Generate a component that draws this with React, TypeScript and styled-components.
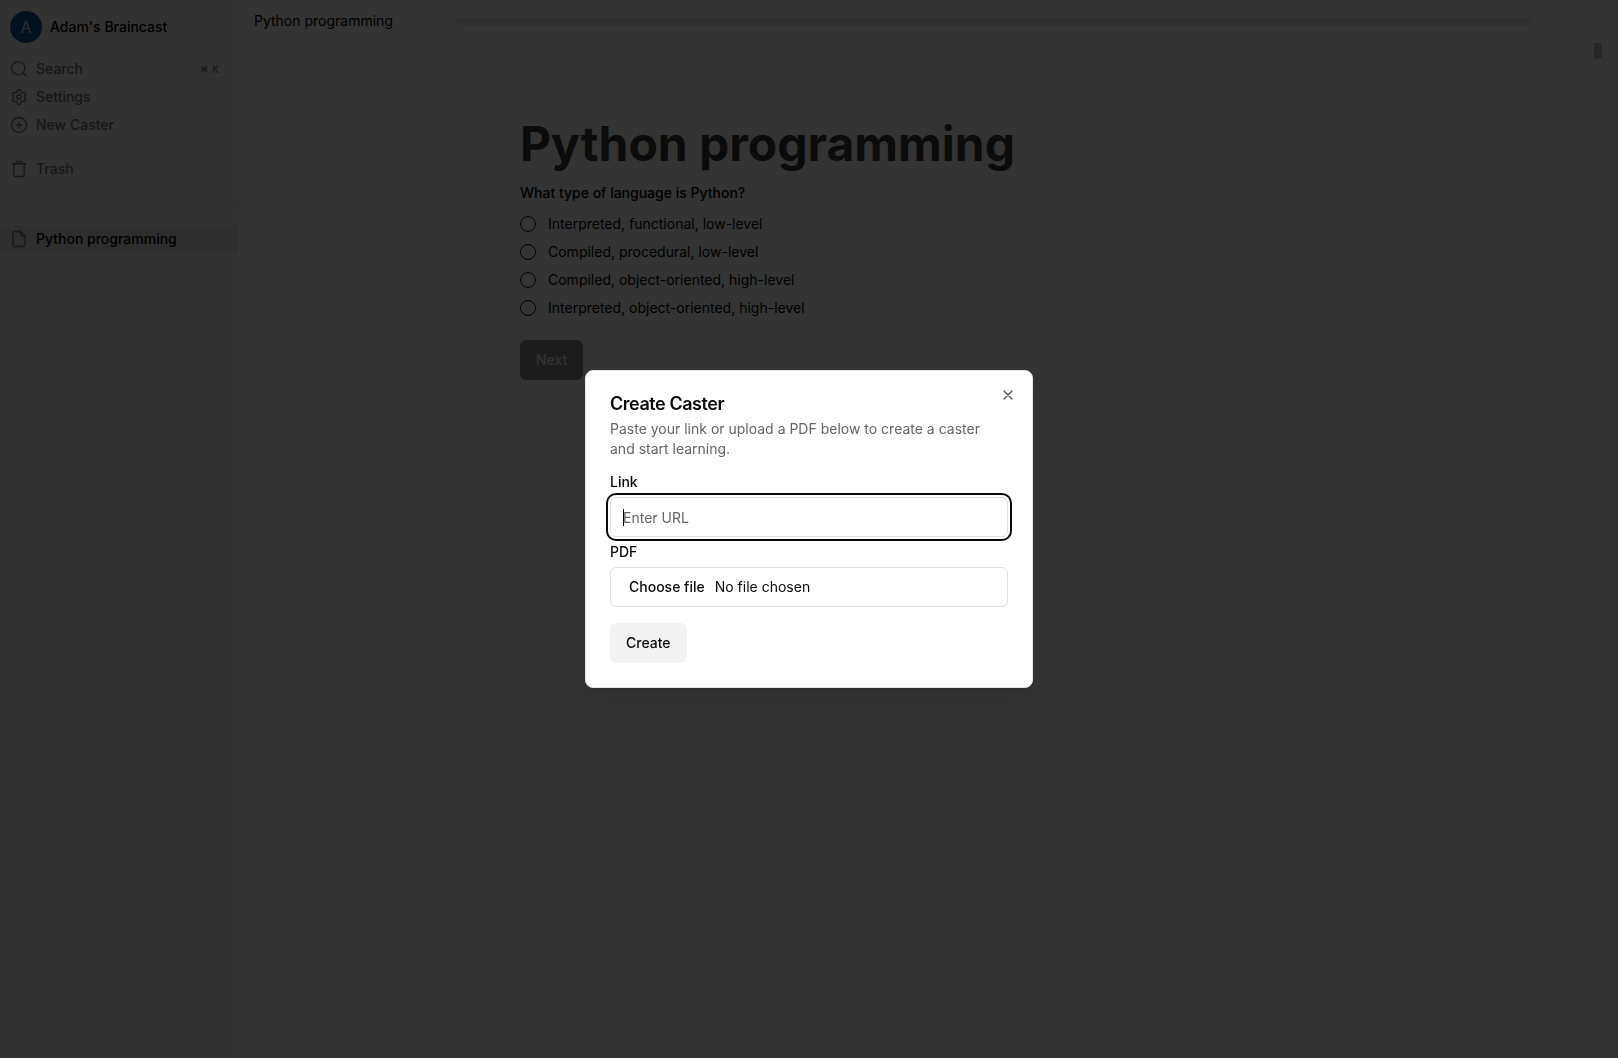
import React from "react";
import styled, { createGlobalStyle } from "styled-components";
import { Settings } from "lucide-react";

const GlobalStyle = createGlobalStyle`
  *, *::before, *::after { box-sizing: border-box; }
  body {
    margin: 0;
    background: #fff;
    color: #000;
    font-family: Inter, "Liberation Sans", sans-serif;
    font-size: 14px;
    line-height: 20px;
  }
  button, input { font: inherit; color: inherit; }
  h1, h2, p, ul, fieldset { margin: 0; padding: 0; border: 0; }
`;

const Shell = styled.div`
  display: flex;
  height: 100vh;
  overflow: hidden;
`;

const Sidebar = styled.aside`
  width: 238px;
  flex-shrink: 0;
  background: #f7f7f7;
`;

const Account = styled.button`
  display: flex;
  align-items: center;
  gap: 8px;
  width: 100%;
  padding: 11px 10px 12px;
  border: 0;
  background: none;
  font-weight: 500;
  text-align: left;
`;

const Avatar = styled.span`
  display: grid;
  place-items: center;
  width: 32px;
  height: 32px;
  border-radius: 50%;
  background: #0f5196;
  color: #d4dde8;
  font-size: 16px;
  font-weight: 400;
`;

const NavList = styled.ul<{ $gap?: boolean }>`
  list-style: none;
  margin-top: ${(p) => (p.$gap ? "16px" : "0")};
`;

const NavItem = styled.a<{ $active?: boolean }>`
  display: flex;
  align-items: center;
  gap: 8px;
  height: 28px;
  padding: 0 12px 0 10px;
  font-weight: 500;
  text-decoration: none;
  color: ${(p) => (p.$active ? "#000" : "#737373")};
  background: ${(p) => (p.$active ? "#e6e6e6" : "transparent")};
  svg { color: #737373; flex-shrink: 0; }
`;

const Kbd = styled.kbd`
  display: flex;
  align-items: center;
  gap: 4px;
  height: 20px;
  margin-left: auto;
  padding: 0 6px;
  border: 1px solid #e5e5e5;
  border-radius: 4px;
  font-family: Inter, "DejaVu Sans", sans-serif;
  font-size: 10px;
  span { font-size: 8px; }
`;

const Divider = styled.hr`
  margin: 21px 0 20px;
  border: 0;
  border-top: 1px solid #e5e5e5;
`;

const Main = styled.main`
  flex: 1;
  min-width: 0;
  display: flex;
  flex-direction: column;
`;

const TopBar = styled.header`
  display: flex;
  align-items: center;
  gap: 63px;
  height: 43px;
  padding: 0 85px 1px 16px;
  flex-shrink: 0;
`;

const Progress = styled.div`
  flex: 1;
  height: 8px;
  border-radius: 4px;
  background: #e5e5e5;
`;

const ScrollArea = styled.div`
  flex: 1;
  display: flex;
  padding-right: 13px;
`;

const Track = styled.div`
  width: 15px;
  padding: 0 2px 0 3px;
  border: solid #efefef;
  border-width: 0 1px;
`;

const Thumb = styled.div`
  height: 16px;
  border-radius: 0 0 4px 4px;
  background: #bdbdbd;
`;

const Content = styled.div`
  flex: 1;
  padding-top: 77px;
`;

const Quiz = styled.form`
  max-width: 788px;
  margin: 0 auto;
`;

const Title = styled.h1`
  font-size: 48px;
  line-height: 48px;
  font-weight: 700;
  color: #3b3b3b;
  margin-bottom: 15px;
`;

const Question = styled.legend`
  padding: 0;
  font-weight: 500;
  margin-bottom: 11px;
`;

const Option = styled.label`
  display: flex;
  align-items: center;
  gap: 12px;
  margin-bottom: 8px;
`;

const Radio = styled.input`
  appearance: none;
  width: 16px;
  height: 16px;
  margin: 0;
  border: 1px solid #171717;
  border-radius: 50%;
`;

const Button = styled.button<{ $muted?: boolean }>`
  height: 40px;
  padding: 0 16px;
  border: 0;
  border-radius: 6px;
  font-weight: 500;
  background: ${(p) => (p.$muted ? "#8b8b8b" : "#f3f3f3")};
  color: ${(p) => (p.$muted ? "#fafafa" : "#0a0a0a")};
`;

const Submit = styled.div`
  margin-top: 14px;
`;

const Overlay = styled.div`
  position: fixed;
  inset: 0;
  display: grid;
  place-items: center;
  background: rgba(0, 0, 0, 0.8);
`;

const Dialog = styled.div`
  position: relative;
  display: grid;
  gap: 16px;
  width: 100%;
  max-width: 448px;
  padding: 24px;
  border: 1px solid #e5e5e5;
  border-radius: 8px;
  background: #fff;
  color: #0a0a0a;
  box-shadow: 0 10px 15px -3px rgba(0, 0, 0, 0.1), 0 4px 6px -4px rgba(0, 0, 0, 0.1);
`;

const DialogHeader = styled.div`
  display: grid;
  gap: 6px;
`;

const DialogTitle = styled.h2`
  font-size: 18px;
  line-height: 18px;
  font-weight: 600;
  letter-spacing: -0.025em;
`;

const Description = styled.p`
  color: #666;
`;

const Fields = styled.form`
  display: grid;
  gap: 8px;
  justify-items: start;
  button { margin-top: 8px; }
`;

const Label = styled.label`
  font-weight: 500;
  line-height: 14px;
`;

const InputWrap = styled.div`
  position: relative;
  width: 100%;
`;

const TextInput = styled.input`
  display: block;
  width: 100%;
  height: 40px;
  padding: 0 12px;
  border: 1px solid #e0e0e0;
  border-radius: 6px;
  background: #fff;
  caret-color: transparent;
  outline: none;
  &::placeholder { color: #666; opacity: 1; }
  &:focus { box-shadow: 0 0 0 2px #fff, 0 0 0 4px #0a0a0a; }
`;

const Caret = styled.span`
  position: absolute;
  left: 13px;
  top: 12px;
  width: 1px;
  height: 17px;
  background: #000;
`;

const FileBox = styled.div`
  position: relative;
  display: flex;
  align-items: center;
  gap: 10px;
  width: 100%;
  height: 40px;
  padding: 0 18px;
  border: 1px solid #e0e0e0;
  border-radius: 6px;
  strong { font-weight: 500; }
`;

const FileInput = styled.input`
  position: absolute;
  inset: 0;
  width: 100%;
  opacity: 0;
`;

const Close = styled.button`
  position: absolute;
  top: 16px;
  right: 16px;
  display: grid;
  padding: 0;
  border: 0;
  background: none;
  opacity: 0.7;
`;

const Icon = ({ children }: { children: React.ReactNode }) => (
  <svg width="18" height="18" viewBox="0 0 24 24" fill="none" stroke="currentColor" strokeWidth="1.7" strokeLinecap="round" strokeLinejoin="round" aria-hidden="true">
    {children}
  </svg>
);

const SearchIcon = () => (
  <Icon>
    <circle cx="11" cy="11" r="8.8" />
    <path d="m17.4 17.4 4.2 4.2" />
  </Icon>
);

const PlusIcon = () => (
  <Icon>
    <circle cx="12" cy="12" r="10" />
    <path d="M12 8v8M8 12h8" />
  </Icon>
);

const TrashIcon = () => (
  <Icon>
    <path d="M3 5h18M5 5v15a2 2 0 0 0 2 2h10a2 2 0 0 0 2-2V5M8 5V4a2 2 0 0 1 2-2h4a2 2 0 0 1 2 2v1" />
  </Icon>
);

const FileIcon = () => (
  <Icon>
    <path d="M14 2H6a2 2 0 0 0-2 2v16a2 2 0 0 0 2 2h12a2 2 0 0 0 2-2V8Z" />
    <path d="M14 2v4a2 2 0 0 0 2 2h4" />
  </Icon>
);

const options = [
  "Interpreted, functional, low-level",
  "Compiled, procedural, low-level",
  "Compiled, object-oriented, high-level",
  "Interpreted, object-oriented, high-level",
];

export default function App() {
  return (
    <>
      <GlobalStyle />
      <Shell>
        <Sidebar>
          <Account type="button">
            <Avatar>A</Avatar>
            Adam's Braincast
          </Account>
          <nav>
            <NavList>
              <li><NavItem href="#search"><SearchIcon />Search<Kbd><span>⌘</span>K</Kbd></NavItem></li>
              <li><NavItem href="#settings"><Settings size={18} strokeWidth={1.8} />Settings</NavItem></li>
              <li><NavItem href="#new"><PlusIcon />New Caster</NavItem></li>
            </NavList>
            <NavList $gap>
              <li><NavItem href="#trash"><TrashIcon />Trash</NavItem></li>
            </NavList>
            <Divider />
            <NavList>
              <li><NavItem href="#python" $active><FileIcon />Python programming</NavItem></li>
            </NavList>
          </nav>
        </Sidebar>
        <Main>
          <TopBar>
            <span>Python programming</span>
            <Progress role="progressbar" aria-label="Quiz progress" aria-valuenow={0} />
          </TopBar>
          <ScrollArea>
            <Content>
              <Quiz>
                <Title>Python programming</Title>
                <fieldset>
                  <Question>What type of language is Python?</Question>
                  {options.map((text) => (
                    <Option key={text}>
                      <Radio type="radio" name="answer" />
                      {text}
                    </Option>
                  ))}
                </fieldset>
                <Submit>
                  <Button type="button" $muted>Next</Button>
                </Submit>
              </Quiz>
            </Content>
            <Track><Thumb /></Track>
          </ScrollArea>
        </Main>
      </Shell>
      <Overlay>
        <Dialog role="dialog" aria-modal="true" aria-labelledby="dialog-title">
          <DialogHeader>
            <DialogTitle id="dialog-title">Create Caster</DialogTitle>
            <Description>Paste your link or upload a PDF below to create a caster and start learning.</Description>
          </DialogHeader>
          <Fields>
            <Label htmlFor="link">Link</Label>
            <InputWrap>
              <TextInput id="link" type="url" placeholder="Enter URL" autoFocus />
              <Caret />
            </InputWrap>
            <Label htmlFor="pdf">PDF</Label>
            <FileBox>
              <strong>Choose file</strong>
              <span>No file chosen</span>
              <FileInput id="pdf" type="file" accept="application/pdf" />
            </FileBox>
            <Button type="button">Create</Button>
          </Fields>
          <Close type="button" aria-label="Close">
            <svg width="16" height="16" viewBox="0 0 24 24" fill="none" stroke="currentColor" strokeWidth="2" strokeLinecap="round" aria-hidden="true">
              <path d="M18 6 6 18M6 6l12 12" />
            </svg>
          </Close>
        </Dialog>
      </Overlay>
    </>
  );
}
